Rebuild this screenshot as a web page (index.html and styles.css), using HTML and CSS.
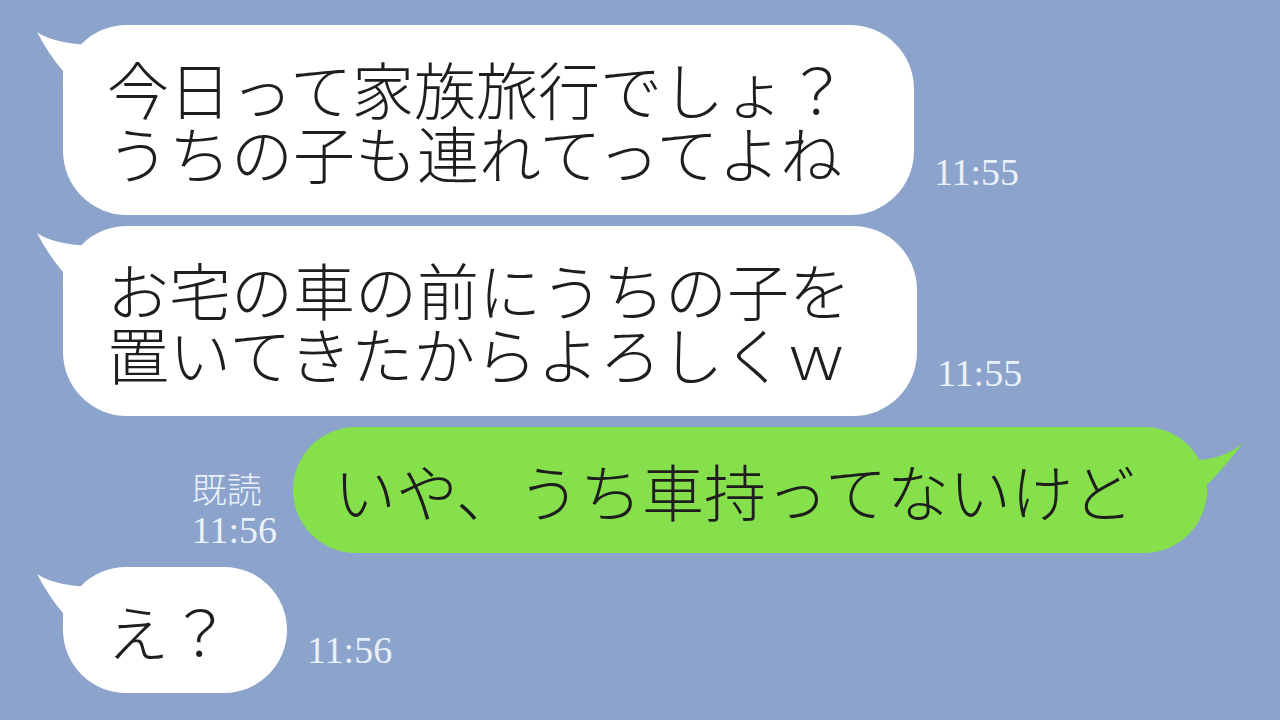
FILE: index.html
```html
<!DOCTYPE html>
<html lang="ja">
<head>
  <meta charset="UTF-8" />
  <meta name="viewport" content="width=device-width, initial-scale=1.0" />
  <title>トーク</title>
  <link rel="stylesheet" href="styles.css">
</head>
<body>
  <div class="chat">
    <div class="row left">
      <div class="bubble white">
        <svg class="tail" viewBox="0 0 70 60"><path d="M4 7 Q20 18 56 20 L70 20 L70 60 L30 60 L30 46 Q16 30 4 7 Z" /></svg>
        今日って家族旅行でしょ？<br>うちの子も連れてってよね
      </div>
      <div class="meta">
        <span class="time">11:55</span>
      </div>
    </div>

    <div class="row left">
      <div class="bubble white">
        <svg class="tail" viewBox="0 0 70 60"><path d="M4 7 Q20 18 56 20 L70 20 L70 60 L30 60 L30 46 Q16 30 4 7 Z" /></svg>
        お宅の車の前にうちの子を<br>置いてきたからよろしくｗ
      </div>
      <div class="meta">
        <span class="time">11:55</span>
      </div>
    </div>

    <div class="row right">
      <div class="meta read">
        <span class="read-label">既読</span>
        <span class="time">11:56</span>
      </div>
      <div class="bubble green">
        <svg class="tail" viewBox="0 0 80 70"><path d="M80 16 Q62 31 37 33 L0 33 L0 70 L44 70 L44 58 Q60 42 80 16 Z" /></svg>
        いや、うち車持ってないけど
      </div>
    </div>

    <div class="row left last">
      <div class="bubble white short">
        <svg class="tail" viewBox="0 0 70 60"><path d="M4 7 Q20 18 56 20 L70 20 L70 60 L30 60 L30 46 Q16 30 4 7 Z" /></svg>
        え？
      </div>
      <div class="meta">
        <span class="time">11:56</span>
      </div>
    </div>
  </div>
</body>
</html>
```

FILE: styles.css
```css
  body {
    margin: 0;
    padding: 0;
    background: #8ca3cb;
    height: 100vh;
    overflow: hidden;
  }
  .chat {
    display: flex;
    flex-direction: column;
    gap: 11px;
    padding: 25px 73px 0 63px;
  }
  .row {
    display: flex;
    align-items: flex-end;
    gap: 20px;
  }
  .row.right {
    justify-content: flex-end;
    gap: 16px;
  }
  .row.last {
    margin-top: 3px;
  }
  .bubble {
    position: relative;
    font-family: "Noto Sans CJK JP", sans-serif;
    font-weight: 300;
    font-size: 62px;
    line-height: 64px;
    color: #1e1e1e;
    padding: 31px 66px 31px 44px;
    border-radius: 64px;
    white-space: nowrap;
  }
  .bubble.white {
    background: #ffffff;
  }
  .bubble.white .tail {
    fill: #ffffff;
    left: -30px;
    top: 0;
    width: 70px;
    height: 60px;
  }
  .bubble.short {
    padding-right: 56px;
  }
  .bubble.green {
    background: #85e04b;
    padding: 31px 72px 31px 41px;
    border-radius: 63px;
  }
  .bubble.green .tail {
    fill: #85e04b;
    right: -36px;
    top: 0;
    width: 80px;
    height: 70px;
  }
  .tail {
    position: absolute;
  }
  .meta {
    display: flex;
    flex-direction: column;
    margin-bottom: 24px;
    color: #eaf0f9;
  }
  .meta.read {
    margin-bottom: 4px;
  }
  .time {
    font-family: "Liberation Serif", serif;
    font-size: 38px;
    line-height: 38px;
  }
  .read-label {
    font-family: "Noto Sans CJK JP", sans-serif;
    font-weight: 300;
    font-size: 35px;
    line-height: 36px;
    margin-bottom: 5px;
  }
```
